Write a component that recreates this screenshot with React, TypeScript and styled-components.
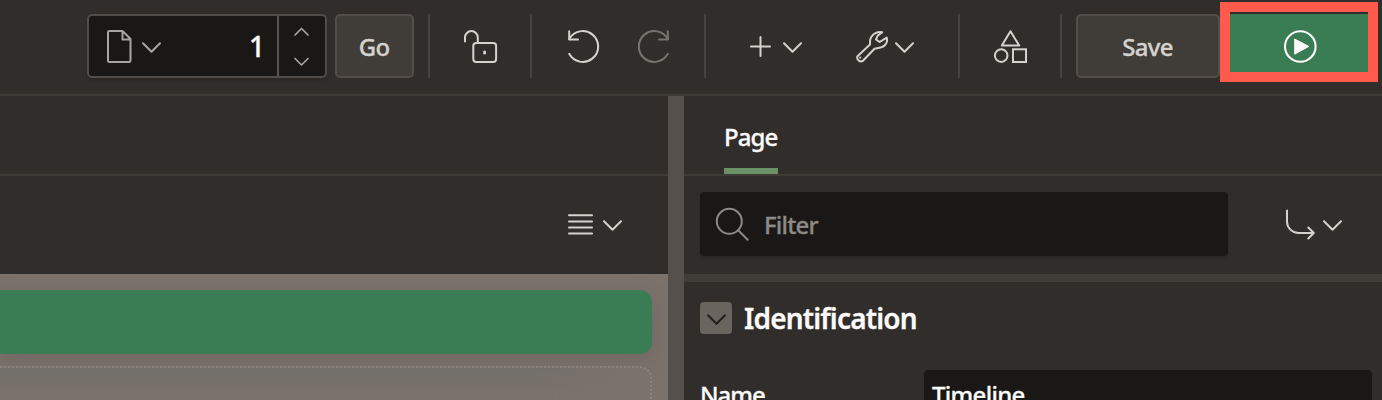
import React from "react";
import styled, { createGlobalStyle } from "styled-components";

const GlobalStyle = createGlobalStyle`
  * { box-sizing: border-box; }
  html, body { margin: 0; background: #312d2a; overflow: hidden; }
`;

const Screen = styled.div`
  width: 1382px;
  height: 400px;
  overflow: hidden;
  display: flex;
  flex-direction: column;
  background: #312d2a;
  color: #fcfbfa;
  font: 500 24px/32px "Noto Sans", "Open Sans", sans-serif;
`;

const Toolbar = styled.header`
  height: 96px;
  flex: none;
  display: flex;
  align-items: flex-start;
  padding: 14px 0 0 87px;
  border-bottom: 2px solid #3f3b37;
`;

const Gap = styled.span<{ $width: number }>`
  flex: none;
  width: ${(p) => p.$width}px;
`;

const PageSelector = styled.div`
  display: flex;
  width: 240px;
  height: 64px;
  margin-right: 8px;
  background: #191816;
  border: 2px solid #524c48;
  border-radius: 5px;
  box-shadow: 0 2px 3px rgba(0, 0, 0, 0.15);
`;

const PageField = styled.div`
  flex: 1;
  display: flex;
  align-items: center;
  padding: 0 12px 0 16px;
`;

const Stepper = styled.div`
  width: 48px;
  display: flex;
  flex-direction: column;
  align-items: center;
  justify-content: space-between;
  padding: 11px 1px 9px 0;
  border-left: 2px solid #5a524c;
`;

const Label = styled.span<{ $spacing?: number; $color?: string; $size?: number; $weight?: number; $stroke?: number }>`
  color: ${(p) => p.$color ?? "#fcfbfa"};
  font-size: ${(p) => p.$size ?? 24}px;
  font-weight: ${(p) => p.$weight ?? 500};
  letter-spacing: ${(p) => p.$spacing ?? 0}px;
  -webkit-text-stroke: ${(p) => p.$stroke ?? 0.3}px currentColor;
  white-space: nowrap;
`;

const PageNumber = styled(Label)`
  margin-left: auto;
`;

const FilterLabel = styled(Label)`
  padding-top: 2px;
`;

const Button = styled.button<{ $width: number }>`
  width: ${(p) => p.$width}px;
  height: 64px;
  padding: 2px 1px 0 0;
  display: flex;
  align-items: center;
  justify-content: center;
  font: inherit;
  background: #403c38;
  border: 2px solid #524d49;
  border-radius: 5px;
`;

const Group = styled.div<{ $width: number; $pad: number; $gap?: number }>`
  width: ${(p) => p.$width}px;
  height: 64px;
  padding-left: ${(p) => p.$pad}px;
  display: flex;
  align-items: center;
  gap: ${(p) => p.$gap ?? 0}px;
  border-left: 2px solid #46423e;
`;

const RunHighlight = styled.div`
  width: 158px;
  height: 80px;
  margin-top: -12px;
  padding-top: 2px;
  border: 10px solid #ff5a4c;
`;

const RunButton = styled.div`
  height: 58px;
  padding: 16px 0 0 54px;
  background: #3a7d54;
`;

const Workspace = styled.main`
  flex: 1;
  display: flex;
  min-height: 0;
`;

const LayoutPane = styled.section`
  width: 668px;
  display: flex;
  flex-direction: column;
`;

const Splitter = styled.div`
  width: 16px;
  background: #55504b;
`;

const PropertyPane = styled.section`
  flex: 1;
  display: flex;
  flex-direction: column;
`;

const TabStrip = styled.div`
  height: 80px;
  flex: none;
  padding-left: 40px;
  border-bottom: 2px solid #3f3b37;
`;

const Tab = styled.div`
  width: 54px;
  height: 78px;
  padding-top: 25px;
  border-bottom: 6px solid #6a9165;
`;

const ViewBar = styled.div`
  height: 98px;
  flex: none;
  display: flex;
  justify-content: flex-end;
  gap: 9px;
  padding: 32px 46px 0 0;
`;

const Canvas = styled.div`
  flex: 1;
  padding-top: 16px;
  padding-right: 16px;
  background: #7b726c;
`;

const Region = styled.div`
  height: 64px;
  border-radius: 0 12px 12px 0;
  background: #3a7d54;
  box-shadow: 0 8px 24px rgba(60, 50, 55, 0.16);
`;

const DropZone = styled.div`
  height: 60px;
  margin-top: 12px;
  border: 2px dotted #8b837c;
  border-left: 0;
  border-radius: 0 12px 0 0;
  background: linear-gradient(90deg, transparent 82%, #7b726c 97%), linear-gradient(#716f69, #7b726c 30px);
`;

const FilterBar = styled.div`
  height: 106px;
  flex: none;
  display: flex;
  padding: 16px 0 0 16px;
  border-bottom: 8px solid #403c38;
`;

const FilterField = styled.div`
  width: 528px;
  height: 64px;
  margin-right: 57px;
  display: flex;
  align-items: center;
  gap: 15px;
  padding: 0 0 0 15px;
  background: #191816;
  border-radius: 4px;
  box-shadow: 0 2px 3px rgba(0, 0, 0, 0.15);
`;

const NavigateMenu = styled.div`
  display: flex;
  gap: 8px;
  padding-top: 16px;
`;

const SectionHeader = styled.div`
  display: flex;
  align-items: center;
  gap: 12px;
  padding: 20px 0 0 16px;
`;

const Toggle = styled.div`
  width: 32px;
  height: 32px;
  display: flex;
  justify-content: center;
  border-radius: 4px;
  background: #69645d;
`;

const PropertyRow = styled.div`
  display: flex;
  margin-top: 36px;
  padding: 0 10px 0 16px;
  line-height: 50px;
`;

const PropertyName = styled.div`
  width: 224px;
`;

const PropertyInput = styled.div`
  flex: 1;
  height: 64px;
  padding-left: 8px;
  background: #191816;
  border-radius: 4px 4px 0 0;
`;

const Glyph = styled.svg<{ $color?: string; $weight?: number }>`
  display: block;
  flex: none;
  fill: none;
  stroke: ${(p) => p.$color ?? "#d5d2ce"};
  stroke-width: ${(p) => p.$weight ?? 2};
  stroke-linecap: round;
  stroke-linejoin: round;
  overflow: visible;
`;

type IconProps = { w?: number; h?: number; color?: string; weight?: number; children: React.ReactNode };

const Icon = ({ w = 33, h = 33, color, weight, children }: IconProps) => (
  <Glyph width={w} height={h} viewBox={`0 0 ${w} ${h}`} $color={color} $weight={weight}>
    {children}
  </Glyph>
);

const Chevron = ({ color }: { color?: string }) => (
  <Icon w={19} color={color}><path d="M1 13.2l8.5 8.5 8.5-8.5" /></Icon>
);

const Rotate = () => (
  <>
    <path d="M2.2 1.2V9.5H11" />
    <path d="M2.2 9.2A15.4 15.4 0 1 1 2.2 23.8" />
  </>
);

export default function App() {
  return (
    <>
      <GlobalStyle />
      <Screen>
        <Toolbar>
          <PageSelector>
            <PageField>
              <Icon w={29} color="#a7a5a1">
                <path d="M4.2 1H17.5l8 8v21.8a1.2 1.2 0 0 1-1.2 1.2H4.2A1.2 1.2 0 0 1 3 30.8V2.2A1.2 1.2 0 0 1 4.2 1zM17.5 1v8.5h8" />
              </Icon>
              <Gap $width={8} />
              <Chevron color="#a7a5a1" />
              <PageNumber $size={28}>1</PageNumber>
            </PageField>
            <Stepper>
              <Icon w={15} h={9} color="#a7a5a1" weight={1.7}><path d="M1 8l6.5-6.5L14 8" /></Icon>
              <Icon w={15} h={9} color="#a7a5a1" weight={1.7}><path d="M1 0.5L7.5 7 14 0.5" /></Icon>
            </Stepper>
          </PageSelector>
          <Button $width={79}><Label $color="#d5d2ce" $spacing={-0.9}>Go</Label></Button>
          <Gap $width={14} />
          <Group $width={102} $pad={34}>
            <Icon>
              <path d="M1 11.5V7.5a6.4 6.4 0 0 1 12.8 0V13" />
              <rect x="9.3" y="13" width="22.8" height="19" rx="3" />
              <path d="M20.6 21.8v1.4" strokeWidth="2.8" />
            </Icon>
          </Group>
          <Group $width={174} $pad={35} $gap={37}>
            <Icon><Rotate /></Icon>
            <Icon color="#77736f"><g transform="translate(33 0) scale(-1 1)"><Rotate /></g></Icon>
          </Group>
          <Group $width={254} $pad={43}>
            <Icon w={22}><path d="M11.5 7v19M2 16.5h19" /></Icon>
            <Gap $width={12} />
            <Chevron />
            <Gap $width={53} />
            <Icon>
              <path d="M27.3 2.2A10 10 0 0 0 15 11.5V14.5L2.2 26.5A4 4 0 0 0 7.7 31L19.5 18.8C24 17.9 27 18 29.8 15.2C32 13 32.4 10 31.7 7.6L24.6 12L21 9.4L22.6 5.8Z" />
              <path d="M5.2 27.6v.2" />
            </Icon>
            <Gap $width={7} />
            <Chevron />
          </Group>
          <Group $width={102} $pad={34}>
            <Icon>
              <path d="M16.5 1.2l8.7 14.4H7.8z" />
              <circle cx="7.2" cy="25.6" r="6.3" />
              <rect x="19" y="19.3" width="13" height="12.7" strokeLinejoin="miter" />
            </Icon>
          </Group>
          <Group $width={16} $pad={0} />
          <Button $width={144}><Label $color="#d5d2ce" $spacing={-0.7}>Save</Label></Button>
          <RunHighlight>
            <RunButton>
              <Icon color="#fcfbfa" weight={2.1}>
                <circle cx="16.3" cy="16.5" r="15.3" />
                <path d="M11 9.2L24.8 16.4L11 24z" fill="#fcfbfa" strokeWidth="1" />
              </Icon>
            </RunButton>
          </RunHighlight>
        </Toolbar>
        <Workspace>
          <LayoutPane>
            <TabStrip />
            <ViewBar>
              <Icon w={27}><path d="M2 7.3h23M2 13.4h23M2 19.4h23M2 25.5h23" /></Icon>
              <Chevron />
            </ViewBar>
            <Canvas>
              <Region />
              <DropZone />
            </Canvas>
          </LayoutPane>
          <Splitter />
          <PropertyPane>
            <TabStrip><Tab><Label $spacing={-0.95}>Page</Label></Tab></TabStrip>
            <FilterBar>
              <FilterField>
                <Icon w={34} color="#8d8a86"><circle cx="14.3" cy="13.3" r="12.5" /><path d="M23.2 22.2l9.5 9.5" /></Icon>
                <FilterLabel $color="#8d8a86" $spacing={-0.8}>Filter</FilterLabel>
              </FilterField>
              <NavigateMenu>
                <Icon w={30}>
                  <path d="M2 2.5v11a11.5 11.5 0 0 0 11.5 11.5H28.8M23.3 19.5l5.5 5.5-5.5 5.5" />
                </Icon>
                <Chevron />
              </NavigateMenu>
            </FilterBar>
            <SectionHeader>
              <Toggle><Chevron color="#22201e" /></Toggle>
              <Label $size={28} $weight={600} $spacing={-0.85}>Identification</Label>
            </SectionHeader>
            <PropertyRow>
              <PropertyName><Label $spacing={-1}>Name</Label></PropertyName>
              <PropertyInput><Label $spacing={-0.7}>Timeline</Label></PropertyInput>
            </PropertyRow>
          </PropertyPane>
        </Workspace>
      </Screen>
    </>
  );
}
